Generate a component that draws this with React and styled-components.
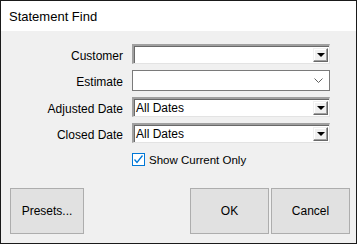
import React, { useState } from 'react';
import styled, { createGlobalStyle } from 'styled-components';

const GlobalStyle = createGlobalStyle`
  html, body {
    margin: 0;
    padding: 0;
    background: #ffffff;
    font-family: "Liberation Sans", Arial, sans-serif;
  }
`;

const Window = styled.div`
  width: 355px;
  height: 242px;
  border: 1px solid #1a1a1a;
  display: flex;
  flex-direction: column;
  background: #f0f0f0;
`;

const TitleBar = styled.div`
  height: 30px;
  background: #ffffff;
  display: flex;
  align-items: center;
  padding-left: 8px;
  font-size: 13px;
  color: #000;
  box-sizing: border-box;
`;

const Body = styled.div`
  flex: 1;
  display: flex;
  flex-direction: column;
  padding: 13px 0 0 0;
`;

const Form = styled.div`
  display: grid;
  grid-template-columns: 122px 198px;
  column-gap: 9px;
  row-gap: 6px;
  align-items: center;
`;

const Label = styled.div`
  font-size: 12px;
  color: #000;
  text-align: right;
  padding-top: 3px;
`;

const Combo = styled.div`
  height: 20px;
  box-sizing: border-box;
  background: #fff;
  border-top: 2px solid #a0a0a0;
  border-left: 2px solid #a0a0a0;
  border-right: 1px solid #e3e3e3;
  border-bottom: 1px solid #e3e3e3;
  box-shadow: inset 1px 1px 0 #696969;
  display: flex;
  align-items: center;
  padding-left: 2px;
  font-size: 12px;
`;

const ComboText = styled.span`
  flex: 1;
  padding-top: 1px;
`;

const DropButton = styled.div`
  width: 15px;
  height: 14px;
  margin-right: 1px;
  box-sizing: border-box;
  background: #f0f0f0;
  border-top: 1px solid #f0f0f0;
  border-left: 1px solid #f0f0f0;
  border-right: 1px solid #696969;
  border-bottom: 1px solid #696969;
  box-shadow: inset -1px -1px 0 #a0a0a0, inset 1px 1px 0 #fff;
  display: flex;
  align-items: center;
  justify-content: center;
`;

const Triangle = styled.div`
  width: 0;
  height: 0;
  border-left: 4px solid transparent;
  border-right: 4px solid transparent;
  border-top: 4px solid #000;
  margin-top: 1px;
`;

const FlatCombo = styled.div`
  height: 21px;
  box-sizing: border-box;
  background: #fff;
  border: 1px solid #7a7a7a;
  display: flex;
  align-items: center;
  justify-content: flex-end;
  padding-right: 6px;
`;

const CheckRow = styled.label`
  grid-column: 2;
  display: flex;
  align-items: center;
  gap: 4px;
  font-size: 11.5px;
  margin-top: 4px;
`;

const CheckBox = styled.span`
  width: 13px;
  height: 13px;
  box-sizing: border-box;
  border: 1px solid #0078d7;
  background: #fff;
  display: flex;
  align-items: center;
  justify-content: center;
`;

const Buttons = styled.div`
  margin-top: auto;
  margin-bottom: 9px;
  display: flex;
  padding: 0 6px 0 9px;
  gap: 2px;
`;

const Button = styled.button`
  width: ${({ w }) => w}px;
  height: 46px;
  box-sizing: border-box;
  background: #e1e1e1;
  border: 1px solid #adadad;
  font-family: "Liberation Sans", Arial, sans-serif;
  font-size: 12px;
  color: #000;
  padding: 0;
  margin: 0;
  ${({ $push }) => ($push ? 'margin-left: auto;' : '')}
`;

const Chevron = () => (
  <svg width="9" height="5" viewBox="0 0 9 5">
    <path d="M0.5 0.5 L4.5 4.5 L8.5 0.5" fill="none" stroke="#606060" strokeWidth="1" />
  </svg>
);

const Check = () => (
  <svg width="11" height="11" viewBox="0 0 11 11">
    <path d="M1.5 5.5 L4 8.5 L9.5 1.5" fill="none" stroke="#0078d7" strokeWidth="1.3" />
  </svg>
);

const DropCombo = ({ value }) => (
  <Combo>
    <ComboText>{value}</ComboText>
    <DropButton>
      <Triangle />
    </DropButton>
  </Combo>
);

const App = () => {
  const [current] = useState(true);
  return (
    <>
      <GlobalStyle />
      <Window>
        <TitleBar>Statement Find</TitleBar>
        <Body>
          <Form>
            <Label>Customer</Label>
            <DropCombo value="" />
            <Label>Estimate</Label>
            <FlatCombo>
              <Chevron />
            </FlatCombo>
            <Label>Adjusted Date</Label>
            <DropCombo value="All Dates" />
            <Label>Closed Date</Label>
            <DropCombo value="All Dates" />
            <CheckRow>
              <CheckBox>{current && <Check />}</CheckBox>
              Show Current Only
            </CheckRow>
          </Form>
          <Buttons>
            <Button w={74}>Presets...</Button>
            <Button w={79} $push>OK</Button>
            <Button w={79}>Cancel</Button>
          </Buttons>
        </Body>
      </Window>
    </>
  );
};

export default App;
